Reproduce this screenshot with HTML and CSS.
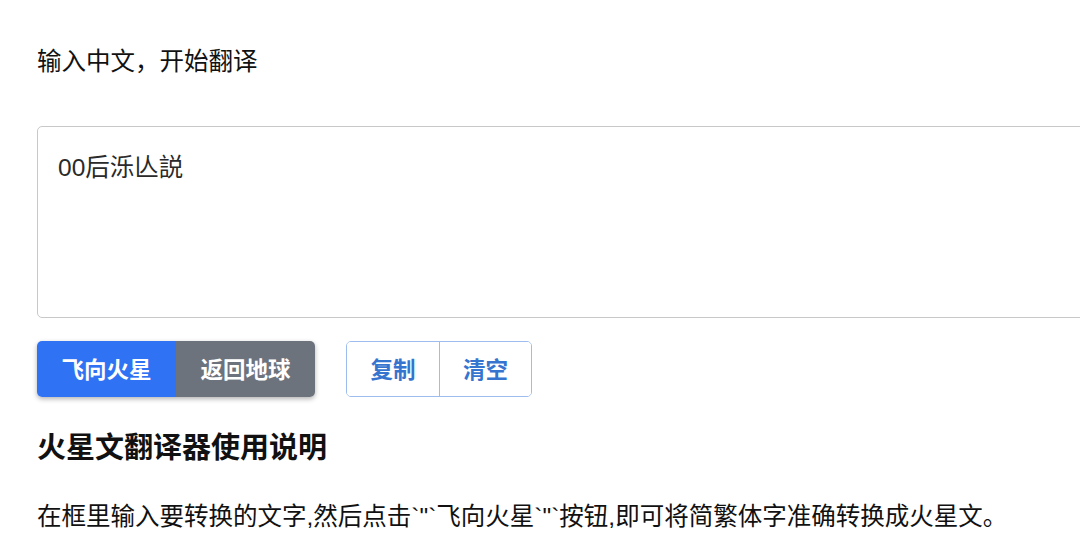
FILE: index.html
```html
<!DOCTYPE html>
<html lang="zh-CN">

<head>
    <meta charset="UTF-8">
    <meta name="viewport" content="width=device-width, initial-scale=1.0">
    <title>火星文翻译器</title>
    <link rel="stylesheet" href="styles.css">
</head>

<body>
    <div class="main">
        <p class="tip">输入中文，开始翻译</p>
        <textarea class="box" id="text">00后泺亾説</textarea>
        <div class="bar">
            <div class="group solid">
                <button class="btn blue">飞向火星</button>
                <button class="btn gray">返回地球</button>
            </div>
            <div class="group outline">
                <button class="btn line">复制</button>
                <button class="btn line">清空</button>
            </div>
        </div>
        <h2 class="title">火星文翻译器使用说明</h2>
        <p class="desc">在框里输入要转换的文字,然后点击`"`飞向火星`"`按钮,即可将简繁体字准确转换成火星文。</p>
    </div>
</body>

</html>
```

FILE: styles.css
```css
body {
    margin: 0;
    font-family: "Liberation Sans", "Noto Sans CJK SC", sans-serif;
    color: #111;
    background: #fff;
    overflow: hidden;
}

.main {
    padding: 0 0 0 37px;
    overflow: hidden;
}

.tip {
    margin: 0;
    padding-top: 45px;
    font-size: 24.5px;
    line-height: 33px;
}

.box {
    display: block;
    box-sizing: border-box;
    margin-top: 48px;
    width: calc(100% + 20px);
    height: 192px;
    padding: 24px 20px;
    border: 1px solid #c8c8c8;
    border-radius: 5px;
    font-family: "Liberation Sans", "Noto Sans CJK SC", sans-serif;
    font-size: 24.5px;
    line-height: 33px;
    color: #2a2a2a;
    resize: none;
    outline: none;
}

.bar {
    display: flex;
    gap: 31px;
    margin-top: 23px;
    padding-bottom: 7px;
}

.group {
    display: flex;
    height: 56px;
    border-radius: 5px;
    overflow: hidden;
}

.solid {
    box-shadow: 0 2px 5px rgba(0, 0, 0, .3);
}

.outline {
    border: 1px solid #9dbdee;
    box-sizing: border-box;
}

.btn {
    border: 0;
    margin: 0;
    padding: 0 0 3px;
    font-family: "Liberation Sans", "Noto Sans CJK SC", sans-serif;
    font-size: 22.5px;
    font-weight: 700;
    cursor: pointer;
}

.blue {
    width: 139px;
    background: #2f73f4;
    color: #fff;
}

.gray {
    width: 139px;
    background: #6c737c;
    color: #fff;
}

.line {
    width: 92px;
    background: #fff;
    color: #3675cf;
}

.line + .line {
    border-left: 1px solid #9dbdee;
}

.title {
    margin: 0;
    padding-top: 24px;
    font-size: 29px;
    line-height: 40px;
    font-weight: 700;
}

.desc {
    margin: 0;
    padding-top: 32px;
    font-size: 24.5px;
    line-height: 33px;
}
```
